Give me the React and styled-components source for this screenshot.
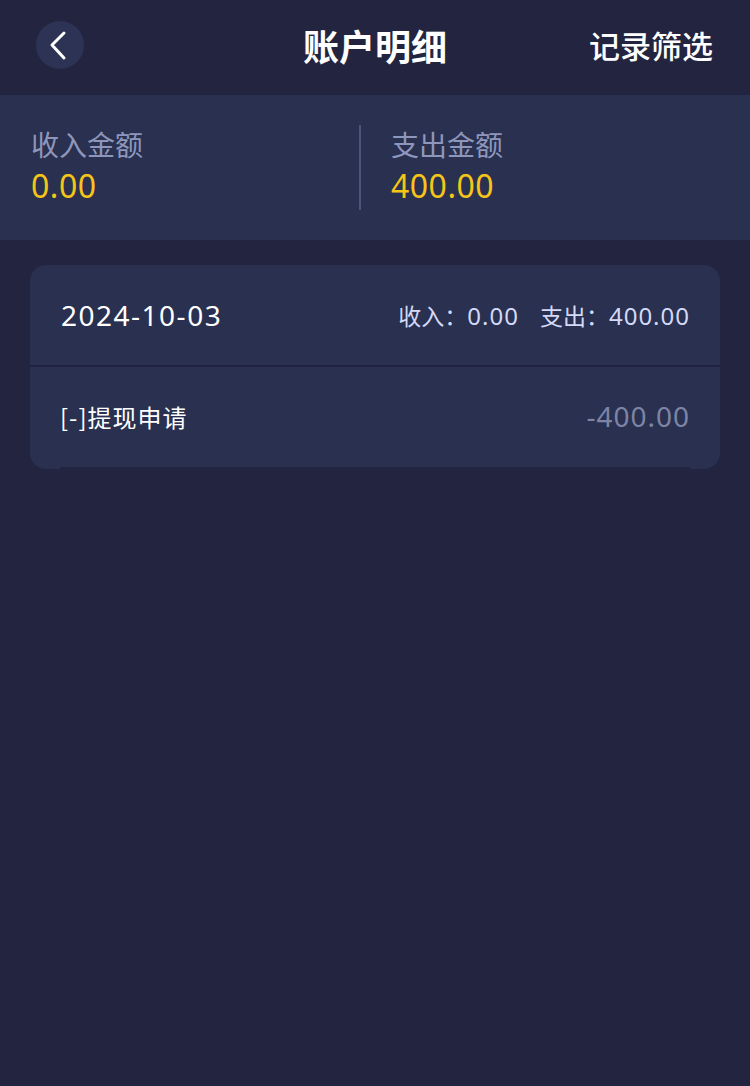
import styled, { createGlobalStyle } from 'styled-components'

const GlobalStyle = createGlobalStyle`
  html, body {
    margin: 0;
    padding: 0;
    background: #23243f;
  }
  body {
    font-family: "Noto Sans CJK SC", "Noto Sans", sans-serif;
  }
`

const Page = styled.div`
  width: 750px;
  min-height: 1086px;
  background: #23243f;
`

const TopBar = styled.header`
  height: 95px;
  display: flex;
  align-items: center;
  justify-content: space-between;
  padding: 0 37px 5px 36px;
  position: relative;
  box-sizing: border-box;
`

const BackButton = styled.button`
  width: 48px;
  height: 48px;
  border-radius: 50%;
  border: none;
  padding: 0;
  background: #2c3354;
  display: flex;
  align-items: center;
  justify-content: center;
`

const Title = styled.h1`
  position: absolute;
  left: 0;
  right: 0;
  top: 22px;
  line-height: 46px;
  text-align: center;
  margin: 0;
  font-size: 36px;
  font-weight: 700;
  color: #ffffff;
  pointer-events: none;
`

const FilterLink = styled.span`
  font-size: 31px;
  font-weight: 500;
  color: #ffffff;
  line-height: 44px;
`

const Summary = styled.section`
  height: 145px;
  background: #293050;
  display: flex;
  align-items: center;
`

const SummaryCol = styled.div`
  width: ${(p) => (p.divider ? 'auto' : '329px')};
  flex: ${(p) => (p.divider ? '1' : 'none')};
  padding-left: ${(p) => (p.divider ? '30px' : '31px')};
  height: 85px;
  display: flex;
  flex-direction: column;
  justify-content: center;
  border-left: ${(p) => (p.divider ? '2px solid #4f5778' : 'none')};
  margin-left: ${(p) => (p.divider ? '-1px' : '0')};
`

const SummaryLabel = styled.div`
  font-size: 28px;
  color: #8e97bb;
  line-height: 40px;
  margin-top: -4px;
`

const SummaryValue = styled.div`
  font-size: 32px;
  color: #f5c518;
  line-height: 44px;
  letter-spacing: 0.5px;
  font-family: "Noto Sans", "Noto Sans CJK SC", sans-serif;
`

const Content = styled.main`
  padding: 25px 30px;
`

const Card = styled.div`
  background: #293050;
  border-radius: 16px;
  overflow: hidden;
`

const CardHead = styled.div`
  height: 102px;
  display: flex;
  align-items: center;
  justify-content: space-between;
  padding: 0 30px 0 31px;
  box-sizing: border-box;
  border-bottom: 2px solid #1f2240;
`

const DateText = styled.div`
  font-size: 28px;
  letter-spacing: 1.5px;
  color: #ffffff;
  font-family: "Noto Sans", "Noto Sans CJK SC", sans-serif;
`

const DayTotals = styled.div`
  display: flex;
  gap: 21px;
  font-size: 23px;
  color: #d3d9f7;
`

const Num = styled.span`
  font-family: "Noto Sans", "Noto Sans CJK SC", sans-serif;
  font-size: 24px;
  letter-spacing: 1px;
`

const ItemRow = styled.div`
  margin: 0 30px;
  height: 102px;
  display: flex;
  align-items: center;
  justify-content: space-between;
  padding-bottom: 2px;
  box-sizing: border-box;
  border-bottom: 2px solid #23243f;
`

const ItemName = styled.div`
  font-size: 24px;
  letter-spacing: 1px;
  color: #ffffff;
`

const ItemAmount = styled.div`
  font-size: 28px;
  letter-spacing: 1px;
  color: #7d84a5;
  font-family: "Noto Sans", "Noto Sans CJK SC", sans-serif;
`

export default function App() {
  return (
    <Page>
      <GlobalStyle />
      <TopBar>
        <BackButton aria-label="返回">
          <svg width="48" height="48" viewBox="0 0 48 48">
            <polyline
              points="28,12 16,24 28,37"
              fill="none"
              stroke="#ffffff"
              strokeWidth="3"
              strokeLinecap="round"
              strokeLinejoin="round"
            />
          </svg>
        </BackButton>
        <Title>账户明细</Title>
        <FilterLink>记录筛选</FilterLink>
      </TopBar>

      <Summary>
        <SummaryCol>
          <SummaryLabel>收入金额</SummaryLabel>
          <SummaryValue>0.00</SummaryValue>
        </SummaryCol>
        <SummaryCol divider>
          <SummaryLabel>支出金额</SummaryLabel>
          <SummaryValue>400.00</SummaryValue>
        </SummaryCol>
      </Summary>

      <Content>
        <Card>
          <CardHead>
            <DateText>2024-10-03</DateText>
            <DayTotals>
              <span>
                收入：<Num>0.00</Num>
              </span>
              <span>
                支出：<Num>400.00</Num>
              </span>
            </DayTotals>
          </CardHead>
          <ItemRow>
            <ItemName>[-]提现申请</ItemName>
            <ItemAmount>-400.00</ItemAmount>
          </ItemRow>
        </Card>
      </Content>
    </Page>
  )
}
